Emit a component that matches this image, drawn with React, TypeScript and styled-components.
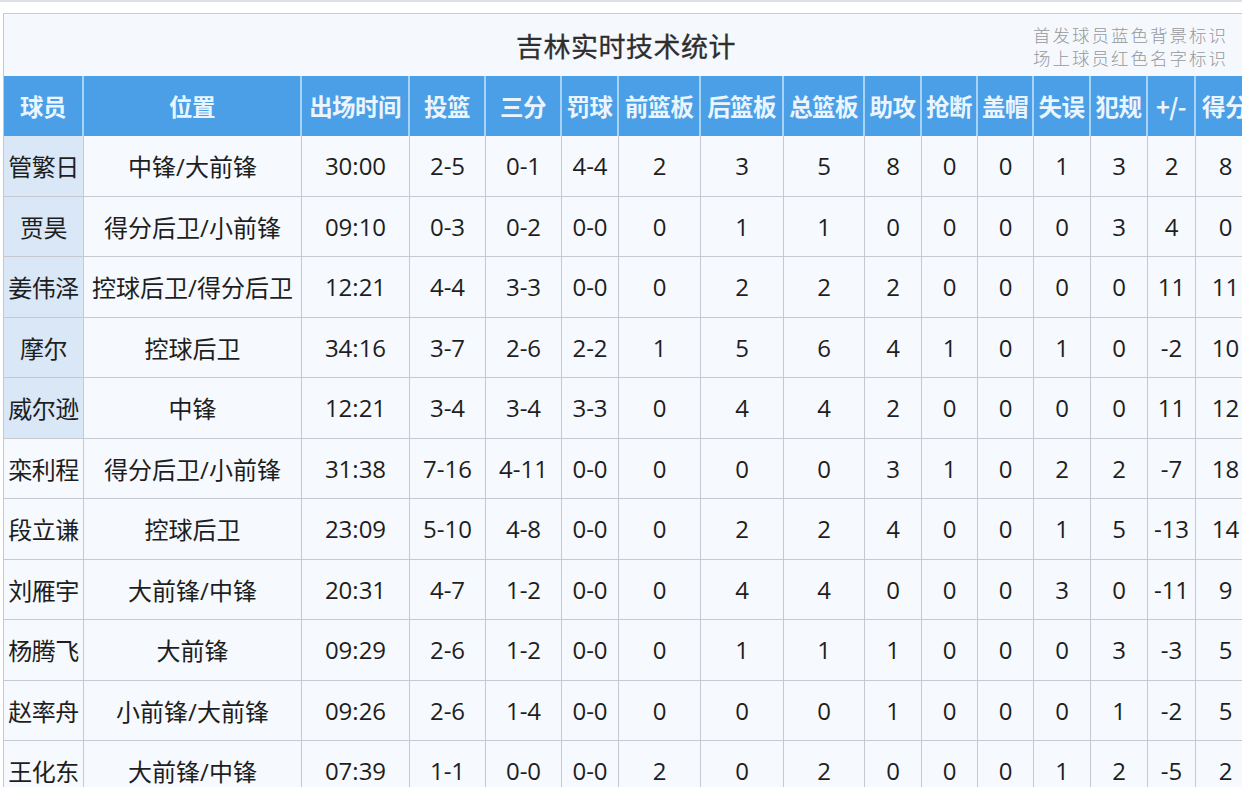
import React from "react";
import styled, { createGlobalStyle } from "styled-components";

const Global = createGlobalStyle`
  html, body { margin: 0; padding: 0; background: #ffffff; }
  body { font-family: "Open Sans", "Noto Sans CJK SC", sans-serif; overflow: hidden; }
`;

const COLS = [80, 218, 108, 76, 76, 57, 82, 83, 81, 57, 56, 56, 57, 57, 48, 60];

const Page = styled.div`
  width: 1242px;
  height: 787px;
  overflow: hidden;
  border-top: 2px solid #dcdfe3;
  padding-top: 11px;
  box-sizing: border-box;
`;

const Panel = styled.div`
  margin-left: 3px;
  width: ${COLS.reduce((a, b) => a + b, 0)}px;
  border-left: 1px solid #c3c8cf;
  border-top: 1px solid #c9cdd3;
  background: #f5f8fc;
`;

const TitleBar = styled.div`
  height: 62px;
  display: grid;
  grid-template-columns: 1fr auto 1fr;
  align-items: center;
  background: #f5f8fc;
`;

const Title = styled.div`
  grid-column: 2;
  font-family: "Noto Sans CJK SC", sans-serif;
  font-size: 27px;
  font-weight: 400;
  color: #2e2e2e;
  letter-spacing: 0.5px;
  margin-left: -8px;
  -webkit-text-stroke: 0.3px #2e2e2e;
`;

const Note = styled.div`
  grid-column: 3;
  justify-self: end;
  margin-right: 28px;
  font-family: "Noto Sans CJK SC", sans-serif;
  font-size: 17.5px;
  font-weight: 300;
  line-height: 23px;
  color: #96989c;
  letter-spacing: 2px;
  text-align: right;
  padding-top: 2px;
`;

const Grid = styled.div`
  display: grid;
  grid-template-columns: ${COLS.map((c) => c + "px").join(" ")};
  grid-template-rows: 60px;
  grid-auto-rows: 60.5px;
`;

const HeadCell = styled.div`
  box-sizing: border-box;
  background: #4a9fe6;
  border-right: 2px solid #a6d3f6;
  display: flex;
  align-items: center;
  justify-content: center;
  font-family: "Noto Sans CJK SC", sans-serif;
  font-weight: 700;
  font-size: 23.5px;
  color: #eaf5ff;
  white-space: nowrap;
  letter-spacing: -0.6px;
  overflow: hidden;
`;

const Cell = styled.div<{ $starter?: boolean; $name?: boolean }>`
  box-sizing: border-box;
  background: ${(p) => (p.$starter ? "#d9e7f7" : "#f6f9fd")};
  border-right: 1px solid #c6cad0;
  border-bottom: 1px solid #c6cad0;
  display: flex;
  align-items: center;
  justify-content: center;
  font-size: 24px;
  color: #1e1e1e;
  white-space: nowrap;
  letter-spacing: ${(p) => (p.$name ? "-0.5px" : "0")};
`;

const HEAD = ["球员", "位置", "出场时间", "投篮", "三分", "罚球", "前篮板", "后篮板", "总篮板", "助攻", "抢断", "盖帽", "失误", "犯规", "+/-", "得分"];

const ROWS: string[][] = [
  ["管繁日", "中锋/大前锋", "30:00", "2-5", "0-1", "4-4", "2", "3", "5", "8", "0", "0", "1", "3", "2", "8"],
  ["贾昊", "得分后卫/小前锋", "09:10", "0-3", "0-2", "0-0", "0", "1", "1", "0", "0", "0", "0", "3", "4", "0"],
  ["姜伟泽", "控球后卫/得分后卫", "12:21", "4-4", "3-3", "0-0", "0", "2", "2", "2", "0", "0", "0", "0", "11", "11"],
  ["摩尔", "控球后卫", "34:16", "3-7", "2-6", "2-2", "1", "5", "6", "4", "1", "0", "1", "0", "-2", "10"],
  ["威尔逊", "中锋", "12:21", "3-4", "3-4", "3-3", "0", "4", "4", "2", "0", "0", "0", "0", "11", "12"],
  ["栾利程", "得分后卫/小前锋", "31:38", "7-16", "4-11", "0-0", "0", "0", "0", "3", "1", "0", "2", "2", "-7", "18"],
  ["段立谦", "控球后卫", "23:09", "5-10", "4-8", "0-0", "0", "2", "2", "4", "0", "0", "1", "5", "-13", "14"],
  ["刘雁宇", "大前锋/中锋", "20:31", "4-7", "1-2", "0-0", "0", "4", "4", "0", "0", "0", "3", "0", "-11", "9"],
  ["杨腾飞", "大前锋", "09:29", "2-6", "1-2", "0-0", "0", "1", "1", "1", "0", "0", "0", "3", "-3", "5"],
  ["赵率舟", "小前锋/大前锋", "09:26", "2-6", "1-4", "0-0", "0", "0", "0", "1", "0", "0", "0", "1", "-2", "5"],
  ["王化东", "大前锋/中锋", "07:39", "1-1", "0-0", "0-0", "2", "0", "2", "0", "0", "0", "1", "2", "-5", "2"],
];

export default function App() {
  return (
    <>
      <Global />
      <Page>
        <Panel>
          <TitleBar>
            <Title>吉林实时技术统计</Title>
            <Note>
              首发球员蓝色背景标识
              <br />
              场上球员红色名字标识
            </Note>
          </TitleBar>
          <Grid>
            {HEAD.map((h) => (
              <HeadCell key={h}>{h}</HeadCell>
            ))}
            {ROWS.map((row, ri) =>
              row.map((v, ci) => (
                <Cell key={ri + "-" + ci} $starter={ci === 0 && ri < 5} $name={ci === 0}>
                  {v}
                </Cell>
              ))
            )}
          </Grid>
        </Panel>
      </Page>
    </>
  );
}
